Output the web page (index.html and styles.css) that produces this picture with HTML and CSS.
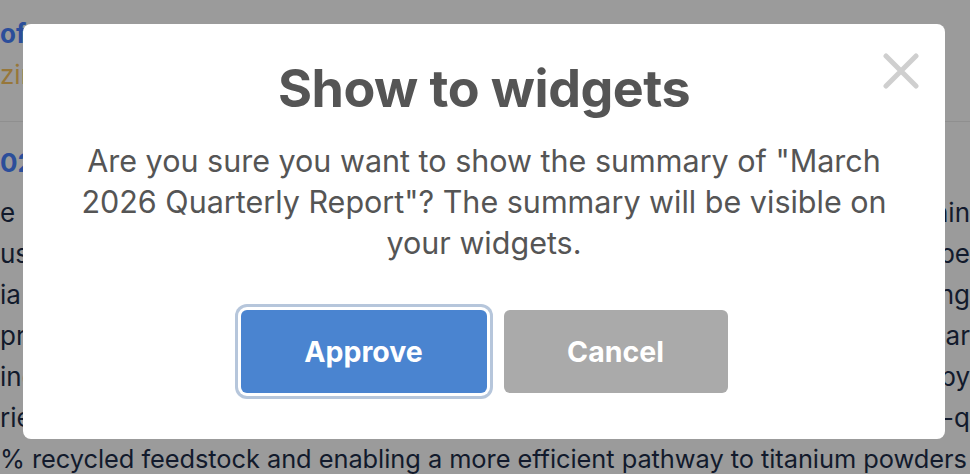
FILE: index.html
```html
<!DOCTYPE html>
<html lang="en">
<head>
<meta charset="utf-8">
<title>Show to widgets</title>
<link rel="stylesheet" href="styles.css">
</head>
<body>
<main class="page">
  <div class="row heading-blue"><span class="left">of</span><span class="right"></span></div>
  <div class="row meta-gold"><span class="left">zin</span><span class="right"></span></div>
  <hr class="rule">
  <div class="row heading-blue row-date"><span class="left">02</span><span class="right"></span></div>
  <div class="row text"><span class="left">e</span><span class="right">nin</span></div>
  <div class="row text"><span class="left">us</span><span class="right">pe</span></div>
  <div class="row text"><span class="left">ia</span><span class="right">ng</span></div>
  <div class="row text"><span class="left">pro</span><span class="right">ar</span></div>
  <div class="row text"><span class="left">ing</span><span class="right">by</span></div>
  <div class="row text"><span class="left">rie</span><span class="right">-q</span></div>
  <div class="row text row-full">% recycled feedstock and enabling a more efficient pathway to titanium powders</div>
</main>

<div class="backdrop">
  <section class="modal" role="dialog" aria-labelledby="modal-title">
    <button class="close" aria-label="Close">
      <svg viewBox="0 0 36 36" width="36" height="36"><path d="M3 3 L33 33 M33 3 L3 33" stroke="#cfcfcf" stroke-width="5" stroke-linecap="round" fill="none"/></svg>
    </button>
    <h1 id="modal-title" class="title">Show to widgets</h1>
    <p class="message">Are you sure you want to show the summary of "March 2026 Quarterly Report"? The summary will be visible on your widgets.</p>
    <div class="actions">
      <button class="btn btn-approve">Approve</button>
      <button class="btn btn-cancel">Cancel</button>
    </div>
  </section>
</div>
</body>
</html>
```

FILE: styles.css
```css
* { box-sizing: border-box; }
html, body { margin: 0; padding: 0; }
body {
  width: 970px;
  height: 474px;
  overflow: hidden;
  background: #9b9b9b;
  font-family: Inter, "Noto Sans", sans-serif;
}
.page {
  padding-top: 13px;
  display: flex;
  flex-direction: column;
}
.row {
  display: flex;
  justify-content: space-between;
  white-space: nowrap;
  height: 41px;
  line-height: 41px;
  font-size: 26px;
}
.left { flex: none; }
.right { flex: none; }
.row-date { margin-bottom: 9px; }
.row-full { font-size: 25.4px; letter-spacing: -0.05px; }
.heading-blue { color: #2b4e9a; font-weight: 700; }
.meta-gold { color: #97773a; }
.text { color: #121a2c; }
.rule {
  border: 0;
  border-top: 1px solid #8f8f8f;
  margin: 26px 0 20px;
}
.backdrop {
  position: fixed;
  inset: 0;
}
.modal {
  position: absolute;
  left: 23px;
  top: 24px;
  width: 922px;
  height: 415px;
  background: #fff;
  border-radius: 8px;
  display: flex;
  flex-direction: column;
  align-items: center;
  padding: 33px 40px 0;
  color: #555;
}
.close {
  position: absolute;
  top: 29px;
  right: 26px;
  width: 36px;
  height: 36px;
  padding: 0;
  border: 0;
  background: none;
  display: flex;
}
.title {
  margin: 0;
  font-size: 52px;
  line-height: 64px;
  font-weight: 700;
  letter-spacing: -0.5px;
}
.message {
  margin: 19px 0 0;
  text-align: center;
  font-size: 30.5px;
  line-height: 41px;
  max-width: 830px;
}
.actions {
  display: flex;
  gap: 17px;
  margin-top: 47px;
}
.btn {
  font-family: inherit;
  font-size: 28.5px;
  font-weight: 700;
  color: #fff;
  border: 0;
  border-radius: 6px;
  height: 83px;
}
.btn-approve {
  width: 246px;
  background: #4a84d0;
  box-shadow: 0 0 0 3px #fff, 0 0 0 6px #b6c6db;
}
.btn-cancel {
  width: 224px;
  background: #aaaaaa;
}
```
